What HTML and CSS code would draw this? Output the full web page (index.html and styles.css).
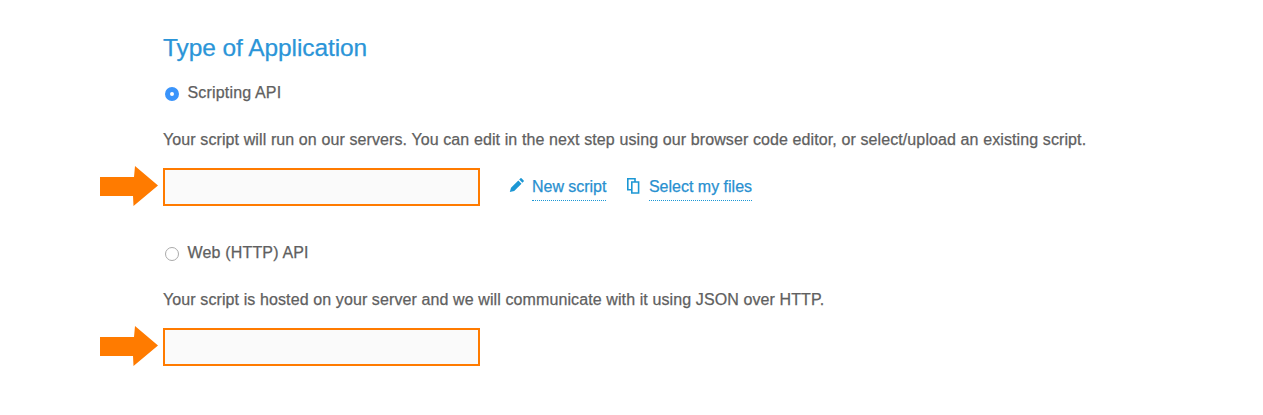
FILE: index.html
```html
<!DOCTYPE html>
<html lang="en">
<head>
<meta charset="utf-8">
<title>Type of Application</title>
<link rel="stylesheet" href="styles.css">
</head>
<body>
<main class="form">
  <h1 class="title">Type of Application</h1>
  <section class="option">
    <label class="choice"><span class="radio checked"></span><span class="choice-text">Scripting API</span></label>
    <p class="description">Your script will run on our servers. You can edit in the next step using our browser code editor, or select/upload an existing script.</p>
    <div class="entry">
      <svg class="arrow" viewBox="0 0 58 40"><path d="M0 11H34L35 0L58 19.500L33.500 40L33 30H0Z"/></svg>
      <div class="field"></div>
      <a class="link new"><svg class="icon" viewBox="0 0 16 16"><path d="M0.800 15L2 10.800L9.300 3.500L12.500 6.700L5.200 14ZM10.200 2.600L11.500 1.300Q12 0.900 12.500 1.300L14.700 3.500Q15.100 4 14.700 4.500L13.400 5.800Z"/></svg><span class="link-text">New script</span></a>
      <a class="link files"><svg class="icon outline" viewBox="0 0 16 16"><path d="M5.500 12.800H1.800V1.800H9V4.800M5.800 5H12.600V16H5.800Z"/></svg><span class="link-text">Select my files</span></a>
    </div>
  </section>
  <section class="option">
    <label class="choice"><span class="radio"></span><span class="choice-text">Web (HTTP) API</span></label>
    <p class="description">Your script is hosted on your server and we will communicate with it using JSON over HTTP.</p>
    <div class="entry">
      <svg class="arrow" viewBox="0 0 58 40"><path d="M0 11H34L35 0L58 19.500L33.500 40L33 30H0Z"/></svg>
      <div class="field"></div>
    </div>
  </section>
</main>
</body>
</html>
```
FILE: styles.css
```css
* { box-sizing: border-box; }
body { margin: 0; background: #fff; color: #606060; font: 16px/20px "Liberation Sans", Arial, sans-serif; -webkit-text-stroke: 0.25px currentColor; }
.form { padding: 33px 0 0 163px; }
.title { margin: 0 0 20px; font-size: 24.500px; line-height: 30px; font-weight: 400; letter-spacing: -0.08px; color: #2b95d8; }
.option { height: 160px; }
.choice { display: flex; align-items: center; height: 20px; }
.choice-text { letter-spacing: 0.17px; }
.radio { width: 14px; height: 14px; margin: 2px 8.500px 0 2px; border: 1px solid #aaa; border-radius: 50%; background: #fff; }
.radio.checked { border: 5px solid #3a94fb; }
.description { margin: 27px 0 18px; white-space: nowrap; letter-spacing: 0.104px; }
.entry { display: flex; height: 38px; }
.arrow { width: 58px; height: 40px; margin: -2px 5px 0 -63px; fill: #ff7b00; }
.field { width: 317px; height: 38px; border: 2px solid #ff7b00; background: #fafafa; }
.link { display: flex; height: 33px; color: #2890d0; white-space: nowrap; }
.new { margin-left: 29px; }
.files { margin-left: 19.500px; }
.link-text { padding-top: 9px; border-bottom: 1px dotted #1c97d4; }
.new .link-text { letter-spacing: -0.03px; }
.icon { width: 16px; height: 16px; margin: 9px 7px 0 0; fill: #1c97d4; overflow: visible; }
.outline { fill: none; stroke: #1c97d4; stroke-width: 1.6; }
```
